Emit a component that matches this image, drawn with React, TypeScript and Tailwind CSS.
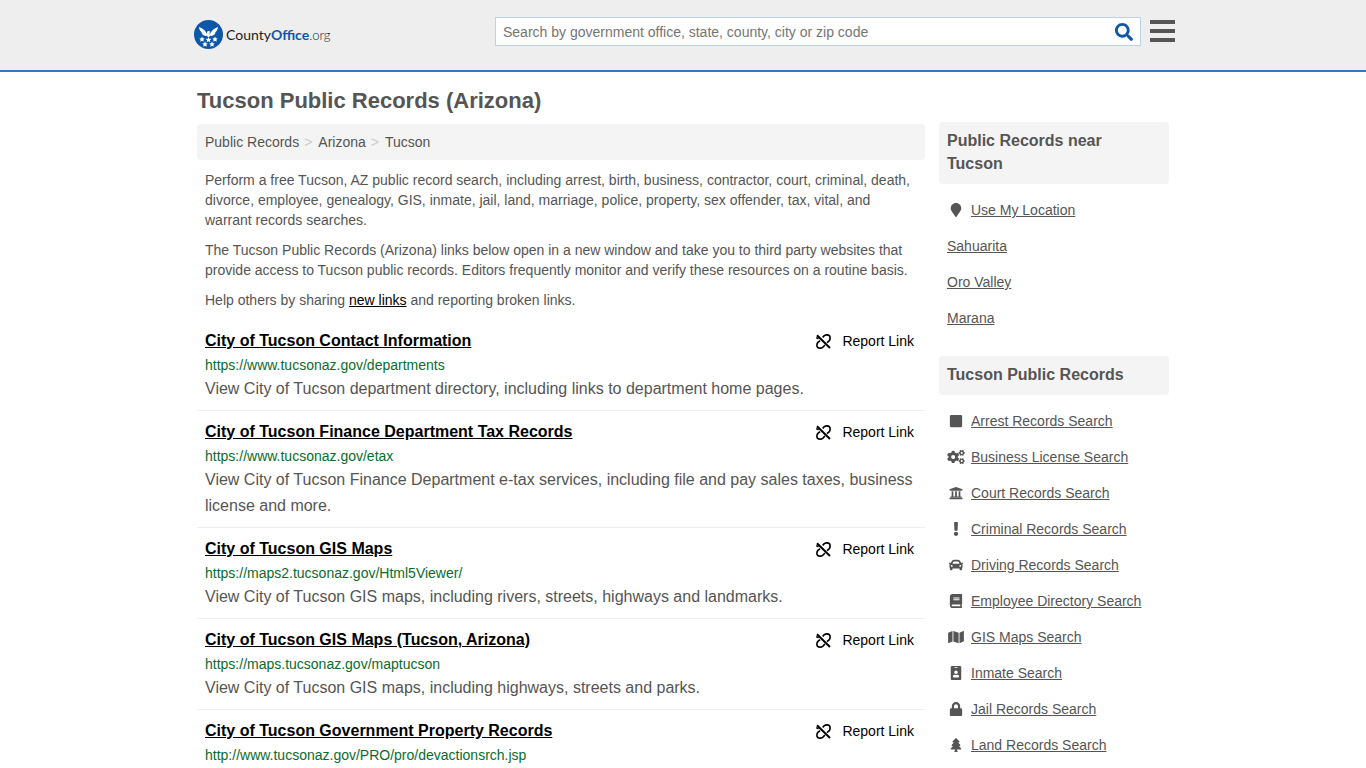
import React from 'react'
import {
  FaBook,
  FaCar,
  FaCogs,
  FaExclamation,
  FaIdBadge,
  FaLock,
  FaMap,
  FaMapMarker,
  FaSearch,
  FaSquare,
  FaTree,
  FaUniversity
} from 'react-icons/fa'

const records = [
  {
    title: 'City of Tucson Contact Information',
    url: 'https://www.tucsonaz.gov/departments',
    description: 'View City of Tucson department directory, including links to department home pages.'
  },
  {
    title: 'City of Tucson Finance Department Tax Records',
    url: 'https://www.tucsonaz.gov/etax',
    description:
      'View City of Tucson Finance Department e-tax services, including file and pay sales taxes, business license and more.'
  },
  {
    title: 'City of Tucson GIS Maps',
    url: 'https://maps2.tucsonaz.gov/Html5Viewer/',
    description: 'View City of Tucson GIS maps, including rivers, streets, highways and landmarks.'
  },
  {
    title: 'City of Tucson GIS Maps (Tucson, Arizona)',
    url: 'https://maps.tucsonaz.gov/maptucson',
    description: 'View City of Tucson GIS maps, including highways, streets and parks.'
  },
  {
    title: 'City of Tucson Government Property Records',
    url: 'http://www.tucsonaz.gov/PRO/pro/devactionsrch.jsp'
  }
]

const nearby = ['Sahuarita', 'Oro Valley', 'Marana']

const searches = [
  { label: 'Arrest Records Search', icon: <FaSquare className="size-3.5" /> },
  { label: 'Business License Search', icon: <FaCogs className="h-3.5 w-[18px]" /> },
  { label: 'Court Records Search', icon: <FaUniversity className="size-3.5" /> },
  { label: 'Criminal Records Search', icon: <FaExclamation className="size-3.5" /> },
  { label: 'Driving Records Search', icon: <FaCar className="size-3.5" /> },
  { label: 'Employee Directory Search', icon: <FaBook className="size-3.5" /> },
  { label: 'GIS Maps Search', icon: <FaMap className="h-3.5 w-4" /> },
  { label: 'Inmate Search', icon: <FaIdBadge className="size-3.5" /> },
  { label: 'Jail Records Search', icon: <FaLock className="size-3.5" /> },
  { label: 'Land Records Search', icon: <FaTree className="size-3.5" /> }
]

const Logo = () => (
  <a href="#" className="flex items-center gap-[3px] font-[Lato,sans-serif] text-sm leading-5 text-[#222]">
    <svg viewBox="0 0 58 58" className="size-[29px]" aria-hidden="true">
      <circle cx="29" cy="29" r="29" fill="#0d57a8" />
      {/* eagle */}
      <g fill="#fff">
        <path d="M10 14 C16 16 22 20 25 26 L27 31 L23 32 C19 31 16 28 14 25 L18 27 C13 23 10 19 10 14 Z" />
        <path d="M48 14 C42 16 36 20 33 26 L31 31 L35 32 C39 31 42 28 44 25 L40 27 C45 23 48 19 48 14 Z" />
        <path d="M26 24 C27 21 31 21 33 24 L31 26 L32 32 L29 35 L26 32 Z" />
      </g>
      {/* stars */}
      <g fill="#fff">
        <path id="star" d="M16 33 l1.7 3.5 3.9.4 -2.9 2.6 .9 3.9 -3.6-2 -3.6 2 .9-3.9 -2.9-2.6 3.9-.4z" />
        <use href="#star" x="13" y="1" />
        <use href="#star" x="26" />
        <use href="#star" x="6" y="10" />
        <use href="#star" x="20" y="10" />
      </g>
    </svg>
    <span>
      County<b className="text-[#0d57a8]">Office</b>
      <span className="text-[13px] font-light">.org</span>
    </span>
  </a>
)

const BrokenLinkIcon = () => (
  <svg
    viewBox="0 0 45 45"
    className="size-[15px]"
    fill="none"
    stroke="currentColor"
    strokeWidth="5"
    strokeLinejoin="round"
    aria-hidden="true"
  >
    <path d="M3 4 L42 42" strokeWidth="6" />
    <path d="M20 10 L25 5 C29 2 37 2 40 5 C43 8 43 16 40 20 L33 26" />
    <path d="M12 20 L5 26 C2 30 2 37 5 40 C8 43 16 43 20 40 L27 33" />
    <path d="M3 8 L3 13 L8 14" strokeWidth="4" />
  </svg>
)

const SideHeading = ({ children }: { children: React.ReactNode }) => (
  <h2 className="mb-2 rounded bg-[#f4f4f4] px-2 pt-[7px] pb-[9px] text-base leading-[23px] font-bold">{children}</h2>
)

const SideLink = ({ label, icon }: { label: string; icon?: React.ReactNode }) => (
  <li className="flex h-9 items-center gap-1.5 pl-2">
    {icon && <span className="flex w-[18px] shrink-0 justify-center">{icon}</span>}
    <a href="#" className="underline">
      {label}
    </a>
  </li>
)

const App = () => {
  return (
    <div className="bg-white font-['Liberation_Sans',Arial,sans-serif] text-sm leading-5 text-[#555]">
      <header className="border-b-2 border-[#337ab7] bg-[#eee]">
        <div className="mx-auto flex h-[70px] max-w-[988px] items-start justify-between gap-2 pr-0.5 pl-[5px]">
          <div className="pt-5">
            <Logo />
          </div>
          <div className="flex flex-1 items-start justify-end gap-[9px] pt-[17px]">
            <form
              role="search"
              className="flex h-[29px] max-w-[646px] flex-1 items-center border border-[#bcd3e6] bg-white pr-[7px] pl-[7px]"
            >
              <input
                type="text"
                aria-label="Search"
                placeholder="Search by government office, state, county, city or zip code"
                className="min-w-0 flex-1 outline-none placeholder:text-[#757575]"
              />
              <button type="button" aria-label="Search" className="text-[#0d57a8]">
                <FaSearch className="size-[18px]" />
              </button>
            </form>
            <button type="button" aria-label="Menu" className="flex flex-col gap-[5px] pt-[3px]">
              <span className="h-1 w-[25px] bg-[#555]" />
              <span className="h-1 w-[25px] bg-[#555]" />
              <span className="h-1 w-[25px] bg-[#555]" />
            </button>
          </div>
        </div>
      </header>

      <div className="mx-auto flex max-w-[988px] gap-3.5 px-2">
        <main className="min-w-0 flex-1 pt-4">
          <h1 className="mb-2.5 text-[22px] leading-[26px] font-bold">Tucson Public Records (Arizona)</h1>

          <nav aria-label="Breadcrumb" className="rounded bg-[#f4f4f4] px-2 py-2">
            <ol className="flex">
              <li>
                <a href="#">Public Records</a>
              </li>
              <li className="before:pr-1.5 before:pl-[5px] before:text-[#ccc] before:content-['>']">
                <a href="#">Arizona</a>
              </li>
              <li className="before:pr-1.5 before:pl-[5px] before:text-[#ccc] before:content-['>']">
                <a href="#">Tucson</a>
              </li>
            </ol>
          </nav>

          <div className="space-y-2.5 px-2 py-2.5">
            <p>
              Perform a free Tucson, AZ public record search, including arrest, birth, business, contractor, court,
              criminal, death, divorce, employee, genealogy, GIS, inmate, jail, land, marriage, police, property, sex
              offender, tax, vital, and warrant records searches.
            </p>
            <p>
              The Tucson Public Records (Arizona) links below open in a new window and take you to third party websites
              that provide access to Tucson public records. Editors frequently monitor and verify these resources on a
              routine basis.
            </p>
            <p>
              Help others by sharing{' '}
              <a href="#" className="text-black underline">
                new links
              </a>{' '}
              and reporting broken links.
            </p>
          </div>

          <ul className="divide-y divide-[#eee]">
            {records.map((record) => (
              <li key={record.title} className="px-2 py-2 last:pb-0">
                <div className="flex items-center justify-between pr-[3px]">
                  <a href="#" className="text-base leading-[26px] font-bold text-black underline">
                    {record.title}
                  </a>
                  <a href="#" className="flex items-center gap-[11px] text-black">
                    <BrokenLinkIcon />
                    Report Link
                  </a>
                </div>
                <p className="leading-[22px] text-[#0b6b2e]">{record.url}</p>
                {record.description && <p className="text-base leading-[26px]">{record.description}</p>}
              </li>
            ))}
          </ul>
        </main>

        <aside className="w-[230px] shrink-0 pt-[50px]">
          <section>
            <SideHeading>Public Records near Tucson</SideHeading>
            <ul>
              <SideLink label="Use My Location" icon={<FaMapMarker className="size-3.5" />} />
              {nearby.map((city) => (
                <SideLink key={city} label={city} />
              ))}
            </ul>
          </section>

          <section className="mt-5">
            <SideHeading>Tucson Public Records</SideHeading>
            <ul>
              {searches.map((search) => (
                <SideLink key={search.label} label={search.label} icon={search.icon} />
              ))}
            </ul>
          </section>
        </aside>
      </div>
    </div>
  )
}

export default App
